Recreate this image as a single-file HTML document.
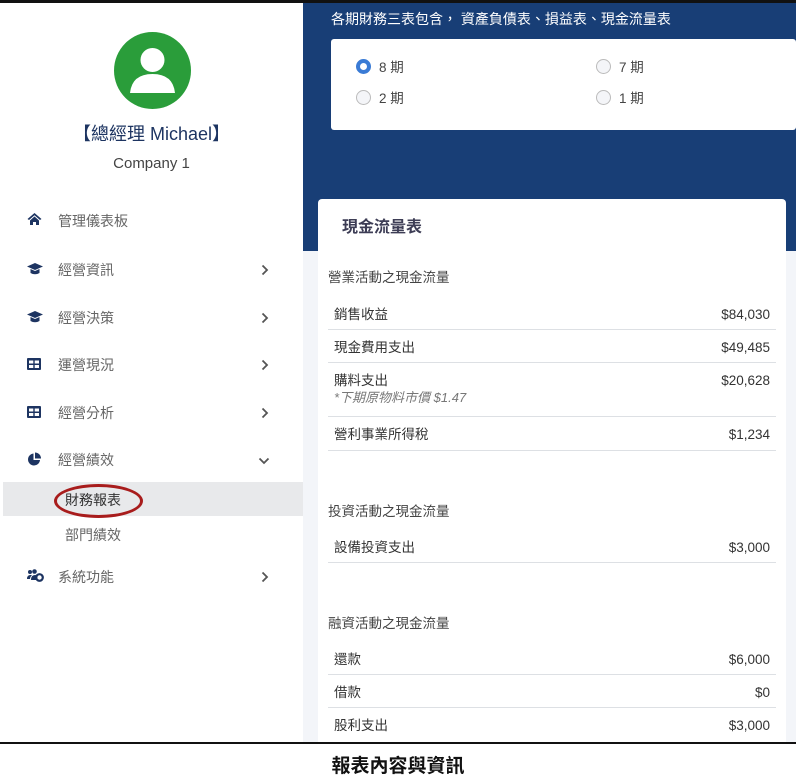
<!DOCTYPE html><html><head><meta charset="utf-8"><style>
*{margin:0;padding:0;box-sizing:border-box}
body{width:796px;height:775px;background:#fff;position:relative;overflow:hidden;font-family:"Liberation Sans","Noto Sans CJK TC",sans-serif;line-height:1.2}
.abs{position:absolute}
.side{left:3px;top:3px;width:300px;height:740px;background:#fff}
.blue{left:303px;top:3px;width:493px;height:248px;background:#183e76}
.gray{left:303px;top:251px;width:493px;height:492px;background:#f3f5f9}
.nav{position:absolute;left:58px;font-size:14px;color:#666}
.ic{position:absolute;left:27px}
.chev{position:absolute;left:261px}
.row{position:absolute;left:328px;width:448px;border-bottom:1px solid #dde0e4;font-size:13.5px;color:#333;height:33px}
.row span{position:absolute;left:6px;top:9px;line-height:17px}
.row b{position:absolute;right:6px;top:9px;font-weight:normal;line-height:17px}
.hd{position:absolute;left:328px;font-size:13.5px;color:#444}
.radio{position:absolute;width:15px;height:15px;border-radius:50%;border:1px solid #bbb;background:#f4f5f8}
.radio.on{border:4px solid #3a7bd5;background:#fff}
.rl{position:absolute;font-size:13.5px;color:#444}
</style></head><body>
<div class="abs" style="left:0;top:0;width:796px;height:3px;background:#111"></div>
<div class="abs side"></div>
<div class="abs blue"></div>
<div class="abs gray"></div>
<svg class="abs" style="left:114px;top:32px" width="77" height="77" viewBox="0 0 77 77"><circle cx="38.5" cy="38.5" r="38.5" fill="#2a9d3a"/><circle cx="38.5" cy="28" r="12" fill="#fff"/><path d="M16 61 Q18 42 38.5 42 Q59 42 61 61 Z" fill="#fff"/></svg>
<div class="abs" style="left:0;width:303px;top:124px;text-align:center;font-size:18px;color:#1d3461">【總經理 Michael】</div>
<div class="abs" style="left:0;width:303px;top:155px;text-align:center;font-size:15px;color:#444">Company 1</div>

<svg class="ic" style="top:212px" width="15" height="14" viewBox="0 0 15 14"><path d="M7.5 1 L0.5 7 L2 8 L7.5 3.3 L13 8 L14.5 7 Z M3 8.5 V13 H6 V10 H9 V13 H12 V8.5 L7.5 4.5 Z" fill="#1d3461"/></svg>
<div class="nav" style="top:213px">管理儀表板</div>

<svg class="ic" style="top:263px" width="16" height="12" viewBox="0 0 16 12"><path d="M8 0 L16 3.5 L8 7 L0 3.5 Z M3.5 6 V10 Q8 12.5 12.5 10 V6 L8 8 Z" fill="#1d3461"/></svg>
<div class="nav" style="top:262px">經營資訊</div>
<svg class="chev" style="top:264px" width="8" height="12" viewBox="0 0 8 12"><path d="M1.5 1.5 L6 6 L1.5 10.5" stroke="#555" stroke-width="1.8" fill="none"/></svg>

<svg class="ic" style="top:311px" width="16" height="12" viewBox="0 0 16 12"><path d="M8 0 L16 3.5 L8 7 L0 3.5 Z M3.5 6 V10 Q8 12.5 12.5 10 V6 L8 8 Z" fill="#1d3461"/></svg>
<div class="nav" style="top:310px">經營決策</div>
<svg class="chev" style="top:312px" width="8" height="12" viewBox="0 0 8 12"><path d="M1.5 1.5 L6 6 L1.5 10.5" stroke="#555" stroke-width="1.8" fill="none"/></svg>

<svg class="ic" style="top:358px" width="14" height="12" viewBox="0 0 14 12"><rect x="0" y="0" width="14" height="12" rx="1" fill="#1d3461"/><rect x="2" y="2.5" width="4.3" height="3" fill="#fff"/><rect x="7.7" y="2.5" width="4.3" height="3" fill="#fff"/><rect x="2" y="7" width="4.3" height="3" fill="#fff"/><rect x="7.7" y="7" width="4.3" height="3" fill="#fff"/></svg>
<div class="nav" style="top:357px">運營現況</div>
<svg class="chev" style="top:359px" width="8" height="12" viewBox="0 0 8 12"><path d="M1.5 1.5 L6 6 L1.5 10.5" stroke="#555" stroke-width="1.8" fill="none"/></svg>

<svg class="ic" style="top:406px" width="14" height="12" viewBox="0 0 14 12"><rect x="0" y="0" width="14" height="12" rx="1" fill="#1d3461"/><rect x="2" y="2.5" width="4.3" height="3" fill="#fff"/><rect x="7.7" y="2.5" width="4.3" height="3" fill="#fff"/><rect x="2" y="7" width="4.3" height="3" fill="#fff"/><rect x="7.7" y="7" width="4.3" height="3" fill="#fff"/></svg>
<div class="nav" style="top:405px">經營分析</div>
<svg class="chev" style="top:407px" width="8" height="12" viewBox="0 0 8 12"><path d="M1.5 1.5 L6 6 L1.5 10.5" stroke="#555" stroke-width="1.8" fill="none"/></svg>

<svg class="ic" style="top:452px" width="15" height="15" viewBox="0 0 15 15"><path d="M6.5 1.5 A6 6 0 1 0 13 8 L6.5 8 Z" fill="#1d3461"/><path d="M8 0.5 A6 6 0 0 1 14 6.5 L8 6.5 Z" fill="#1d3461"/></svg>
<div class="nav" style="top:452px">經營績效</div>
<svg class="abs" style="left:258px;top:457px" width="12" height="8" viewBox="0 0 12 8"><path d="M1.5 1.5 L6 6 L10.5 1.5" stroke="#555" stroke-width="1.8" fill="none"/></svg>

<div class="abs" style="left:3px;top:482px;width:300px;height:34px;background:#e8e9eb"></div>
<div class="abs" style="left:54px;top:484px;width:89px;height:34px;border:3px solid #a81c1c;border-radius:50%"></div>
<div class="abs" style="left:65px;top:492px;font-size:14px;color:#333">財務報表</div>
<div class="abs" style="left:65px;top:527px;font-size:14px;color:#666">部門績效</div>

<svg class="ic" style="top:569px" width="17" height="13" viewBox="0 0 17 13"><circle cx="3" cy="3" r="2" fill="#1d3461"/><circle cx="7.5" cy="2.5" r="2.3" fill="#1d3461"/><path d="M0 10 Q0 6 3.5 6 L5 6 Q3 8 3 10 Z" fill="#1d3461"/><path d="M4 11 Q4 6 8 6 Q10 6 10.5 7 L10 11 Z" fill="#1d3461"/><circle cx="12.5" cy="8.5" r="3.3" fill="none" stroke="#1d3461" stroke-width="2.2"/></svg>
<div class="nav" style="top:569px">系統功能</div>
<svg class="chev" style="top:571px" width="8" height="12" viewBox="0 0 8 12"><path d="M1.5 1.5 L6 6 L1.5 10.5" stroke="#555" stroke-width="1.8" fill="none"/></svg>

<div class="abs" style="left:331px;top:11px;font-size:14px;color:#fff">各期財務三表包含， 資產負債表、損益表、現金流量表</div>
<div class="abs" style="left:331px;top:39px;width:465px;height:91px;background:#fff;border-radius:3px"></div>
<div class="radio on" style="left:356px;top:59px"></div><div class="rl" style="left:379px;top:60px">8 期</div>
<div class="radio" style="left:596px;top:59px"></div><div class="rl" style="left:619px;top:60px">7 期</div>
<div class="radio" style="left:356px;top:90px"></div><div class="rl" style="left:379px;top:91px">2 期</div>
<div class="radio" style="left:596px;top:90px"></div><div class="rl" style="left:619px;top:91px">1 期</div>
<div class="abs" style="left:318px;top:199px;width:468px;height:544px;background:#fff;border-radius:4px 4px 0 0"></div>
<div class="abs" style="left:342px;top:218px;font-size:16px;font-weight:bold;color:#3d3d55">現金流量表</div>
<div class="hd" style="top:270px">營業活動之現金流量</div>
<div class="row" style="top:297px"><span>銷售收益</span><b>$84,030</b></div>
<div class="row" style="top:330px"><span>現金費用支出</span><b>$49,485</b></div>
<div class="row" style="top:363px;height:54px"><span>購料支出<br><i style="color:#777;font-size:13px">*下期原物料市價 $1.47</i></span><b>$20,628</b></div>
<div class="row" style="top:417px;height:34px"><span>營利事業所得稅</span><b>$1,234</b></div>
<div class="hd" style="top:504px">投資活動之現金流量</div>
<div class="row" style="top:530px"><span>設備投資支出</span><b>$3,000</b></div>
<div class="hd" style="top:616px">融資活動之現金流量</div>
<div class="row" style="top:642px"><span>還款</span><b>$6,000</b></div>
<div class="row" style="top:675px"><span>借款</span><b>$0</b></div>
<div class="row" style="top:708px;border:0"><span>股利支出</span><b>$3,000</b></div>
<div class="abs" style="left:0;top:742px;width:796px;height:2px;background:#111"></div>
<div class="abs" style="left:0;width:796px;top:756px;text-align:center;font-size:19px;font-weight:bold;color:#111">報表內容與資訊</div>
</body></html>
